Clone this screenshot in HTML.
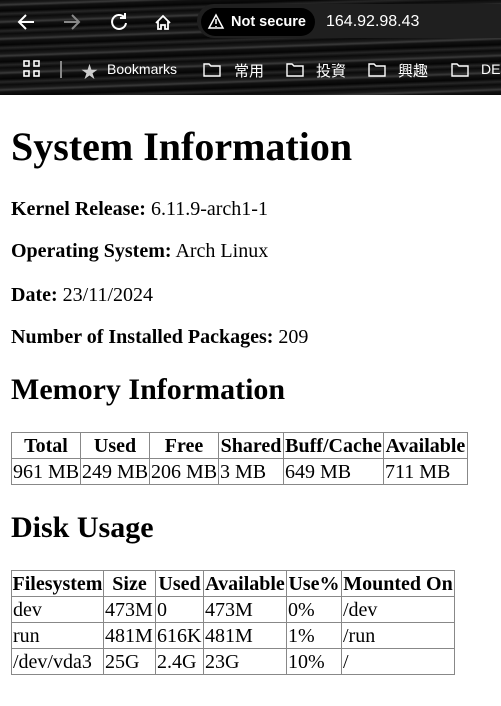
<!DOCTYPE html>
<html><head><meta charset="utf-8"><style>
*{margin:0;padding:0;box-sizing:border-box}
body{width:501px;height:706px;background:#fff;position:relative;overflow:hidden;font-family:"Liberation Serif",serif;color:#000}
.chrome{position:absolute;left:0;top:0;width:501px;height:95px;background:
repeating-linear-gradient(178deg,#0c0c0c 0px,#1a1a1a 3px,#3a3a3a 5px,#111 7px,#050505 11px,#262626 14px,#0a0a0a 17px);}
.ui{position:absolute;font-family:"Liberation Sans","Noto Sans CJK TC",sans-serif;color:#fff;font-size:14px}
.addr{position:absolute;left:197px;top:4px;width:320px;height:34px;border-radius:17px;background:#1f1f1f}
.ns{position:absolute;left:201px;top:8px;width:114px;height:28px;border-radius:14px;background:#000}
.abs{position:absolute;white-space:nowrap}
p{font-size:20px;line-height:22px}
h1{font-size:40px;line-height:44px}
h2{font-size:30px;line-height:33px}
table{position:absolute;border-collapse:collapse;font-size:20px;table-layout:fixed}
td,th{border:1px solid #888;padding:1px 0 0 0;height:26px;line-height:22px;white-space:nowrap;overflow:hidden}
th{text-align:center}
td{text-align:left;padding-left:1px}
</style></head><body>
<div class="chrome"></div>
<div class="addr"></div><div class="ns"></div>
<svg class="abs" style="left:0;top:0" width="501" height="95" fill="none" stroke="#fff" stroke-width="2">
<path d="M34 22H20M26 15l-7 7 7 7"/>
<path d="M64 22h14M72 15l7 7-7 7" stroke="#888"/>
<path d="M124 17a7 7 0 1 0 2 6M125 13v5h-5"/>
<path d="M156 23l7-7 7 7M158 21v8h3v-4h4v4h3v-8" stroke-width="1.8"/>
<path d="M216 15l-7 13h14z" stroke-width="1.5"/><path d="M216 19v5M216 26v1" stroke-width="1.5"/>
<rect x="24" y="61" width="5" height="5" stroke-width="1.6"/><rect x="34" y="61" width="5" height="5" stroke-width="1.6"/><rect x="24" y="71" width="5" height="5" stroke-width="1.6"/><rect x="34" y="71" width="5" height="5" stroke-width="1.6"/>
<path d="M61 61v17" stroke="#888"/>
<path d="M204 64h5l2 2h9v10h-16z" stroke-width="1.4"/>
<path d="M287 64h5l2 2h9v10h-16z" stroke-width="1.4"/>
<path d="M369 64h5l2 2h9v10h-16z" stroke-width="1.4"/>
<path d="M452 64h5l2 2h9v10h-16z" stroke-width="1.4"/>
</svg>
<div class="ui abs" style="left:81px;top:58px;color:#ccc;font-size:17px">★</div>
<div class="ui abs" style="left:231px;top:14px;font-weight:bold;font-size:14.5px">Not secure</div>
<div class="ui abs" style="left:326px;top:13px;font-size:16px">164.92.98.43</div>
<div class="ui abs" style="left:107px;top:61px">Bookmarks</div>
<div class="ui abs" style="left:234px;top:60px;font-size:15px">常用</div>
<div class="ui abs" style="left:316px;top:60px;font-size:15px">投資</div>
<div class="ui abs" style="left:398px;top:60px;font-size:15px">興趣</div>
<div class="ui abs" style="left:481px;top:61px">DE</div>

<h1 class="abs" style="left:11px;top:125px">System Information</h1>
<p class="abs" style="left:11px;top:198px"><b>Kernel Release:</b> 6.11.9-arch1-1</p>
<p class="abs" style="left:11px;top:240px"><b>Operating System:</b> Arch Linux</p>
<p class="abs" style="left:11px;top:284px"><b>Date:</b> 23/11/2024</p>
<p class="abs" style="left:11px;top:326px"><b>Number of Installed Packages:</b> 209</p>
<h2 class="abs" style="left:11px;top:373px">Memory Information</h2>
<table style="left:11px;top:432px;width:456px">
<colgroup><col style="width:69px"><col style="width:69px"><col style="width:69px"><col style="width:65px"><col style="width:100px"><col style="width:84px"></colgroup>
<tr><th>Total</th><th>Used</th><th>Free</th><th>Shared</th><th>Buff/Cache</th><th>Available</th></tr>
<tr><td>961 MB</td><td>249 MB</td><td>206 MB</td><td>3 MB</td><td>649 MB</td><td>711 MB</td></tr>
</table>
<h2 class="abs" style="left:11px;top:511px">Disk Usage</h2>
<table style="left:11px;top:570px;width:443px">
<colgroup><col style="width:92px"><col style="width:52px"><col style="width:48px"><col style="width:83px"><col style="width:55px"><col style="width:113px"></colgroup>
<tr><th>Filesystem</th><th>Size</th><th>Used</th><th>Available</th><th>Use%</th><th>Mounted On</th></tr>
<tr><td>dev</td><td>473M</td><td>0</td><td>473M</td><td>0%</td><td>/dev</td></tr>
<tr><td>run</td><td>481M</td><td>616K</td><td>481M</td><td>1%</td><td>/run</td></tr>
<tr><td>/dev/vda3</td><td>25G</td><td>2.4G</td><td>23G</td><td>10%</td><td>/</td></tr>
</table>
</body></html>
